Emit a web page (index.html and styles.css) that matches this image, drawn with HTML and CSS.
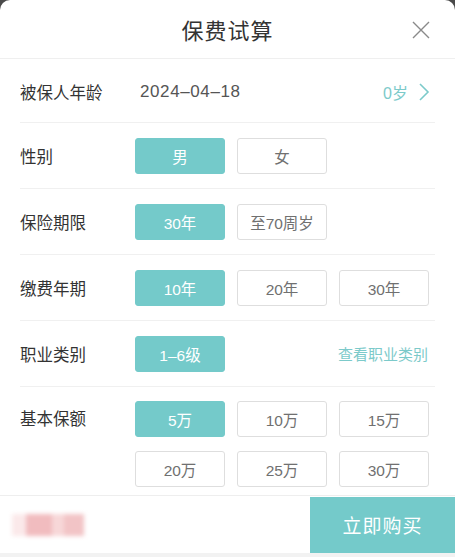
FILE: index.html
```html
<!DOCTYPE html>
<html lang="zh">
<head>
    <meta charset="UTF-8">
    <meta name="viewport" content="width=device-width, initial-scale=1.0">
    <title>保费试算</title>
    <link rel="stylesheet" href="styles.css">
</head>
<body>
    <div class="mask">
        <div class="panel">
            <!-- 标题 -->
            <div class="header">
                <h2 class="title">保费试算</h2>
                <a href="#" class="close">
                    <svg width="20" height="20" viewBox="0 0 20 20"><path d="M2 2 L18 18 M18 2 L2 18" stroke="#8a8a8a" stroke-width="1.4" fill="none"/></svg>
                </a>
            </div>
            <div class="rows">
                <div class="row">
                    <span class="label">被保人年龄</span>
                    <span class="date">2024–04–18</span>
                    <a href="#" class="age">0岁
                        <svg width="12" height="18" viewBox="0 0 12 18"><path d="M2 1 L10 9 L2 17" stroke="#7ccaca" stroke-width="1.6" fill="none"/></svg>
                    </a>
                </div>
                <div class="row">
                    <span class="label">性别</span>
                    <div class="opts">
                        <span class="opt on">男</span>
                        <span class="opt">女</span>
                    </div>
                </div>
                <div class="row">
                    <span class="label">保险期限</span>
                    <div class="opts">
                        <span class="opt on">30年</span>
                        <span class="opt">至70周岁</span>
                    </div>
                </div>
                <div class="row">
                    <span class="label">缴费年期</span>
                    <div class="opts">
                        <span class="opt on">10年</span>
                        <span class="opt">20年</span>
                        <span class="opt">30年</span>
                    </div>
                </div>
                <div class="row">
                    <span class="label">职业类别</span>
                    <div class="opts">
                        <span class="opt on">1–6级</span>
                    </div>
                    <a href="#" class="link">查看职业类别</a>
                </div>
                <div class="row last">
                    <span class="label">基本保额</span>
                    <div class="opts grid">
                        <span class="opt on">5万</span>
                        <span class="opt">10万</span>
                        <span class="opt">15万</span>
                        <span class="opt">20万</span>
                        <span class="opt">25万</span>
                        <span class="opt">30万</span>
                    </div>
                </div>
            </div>
            <!-- 底部 -->
            <div class="footer">
                <div class="price">
                    <i class="b1"></i><i class="b2"></i><i class="b3"></i><i class="b4"></i>
                </div>
                <a href="#" class="buy">立即购买</a>
            </div>
        </div>
    </div>
</body>
</html>
```

FILE: styles.css
```css
*{
    margin: 0;
    padding: 0;
    box-sizing: border-box;
}
body{
    background-color: #fff;
    font-family: "Liberation Sans", "Noto Sans CJK SC", sans-serif;
    color: #333;
}
a{
    text-decoration: none;
}
.mask{
    width: 455px;
    background-color: #4a4a4a;
}
.panel{
    background-color: #fff;
    border-radius: 10px 10px 0 0;
    width: 455px;
}
/* 标题 */
.header{
    height: 59px;
    border-bottom: 1px solid #efefef;
    display: flex;
    align-items: center;
    justify-content: center;
    position: relative;
}
.title{
    font-size: 22px;
    font-weight: normal;
    color: #333;
    letter-spacing: 1px;
}
.close{
    position: absolute;
    right: 24px;
    top: 20px;
    display: flex;
}
/* 每一行 */
.rows{
    padding: 0 20px;
}
.row{
    display: flex;
    align-items: center;
    min-height: 66px;
    border-bottom: 1px solid #f0f0f0;
}
.row:first-child{
    min-height: 64px;
    padding-top: 2px;
}
.row.last{
    border-bottom: none;
    align-items: flex-start;
    padding: 14px 0 8px;
}
.row.last .label{
    line-height: 36px;
}
.label{
    width: 115px;
    flex-shrink: 0;
    font-size: 16.5px;
    color: #333;
}
.date{
    font-size: 17px;
    color: #555;
    margin-left: 5px;
    letter-spacing: 0.6px;
}
.age{
    margin-left: auto;
    margin-right: 5px;
    display: flex;
    align-items: center;
    gap: 10px;
    font-size: 16px;
    color: #7ccaca;
}
.opts{
    display: flex;
    gap: 12px;
}
.opts.grid{
    flex-wrap: wrap;
    width: 294px;
    row-gap: 14px;
}
.opt{
    width: 90px;
    height: 36px;
    border: 1px solid #dedede;
    border-radius: 3px;
    display: flex;
    align-items: center;
    justify-content: center;
    font-size: 15.5px;
    color: #707070;
}
.opt.on{
    background-color: #74caca;
    border-color: #74caca;
    color: #fff;
}
.link{
    margin-left: auto;
    margin-right: 7px;
    font-size: 15px;
    color: #7ccaca;
}
/* 底部 */
.footer{
    display: flex;
    align-items: center;
    justify-content: space-between;
    height: 57px;
    border-top: 1px solid #eee;
    border-bottom: 5px solid #f2f2f2;
    box-sizing: content-box;
}
.price{
    display: flex;
    margin-left: 12px;
    filter: blur(2px);
}
.price i{
    display: block;
    height: 22px;
}
.price .b1{
    width: 14px;
    background-color: #fbe9ea;
}
.price .b2{
    width: 26px;
    background-color: #f1bcbf;
}
.price .b3{
    width: 12px;
    background-color: #f7d7d8;
}
.price .b4{
    width: 20px;
    background-color: #f2c4c6;
}
.buy{
    width: 145px;
    height: 56px;
    background-color: #74caca;
    color: #fff;
    font-size: 19px;
    display: flex;
    align-items: center;
    justify-content: center;
    letter-spacing: 1px;
}
```
